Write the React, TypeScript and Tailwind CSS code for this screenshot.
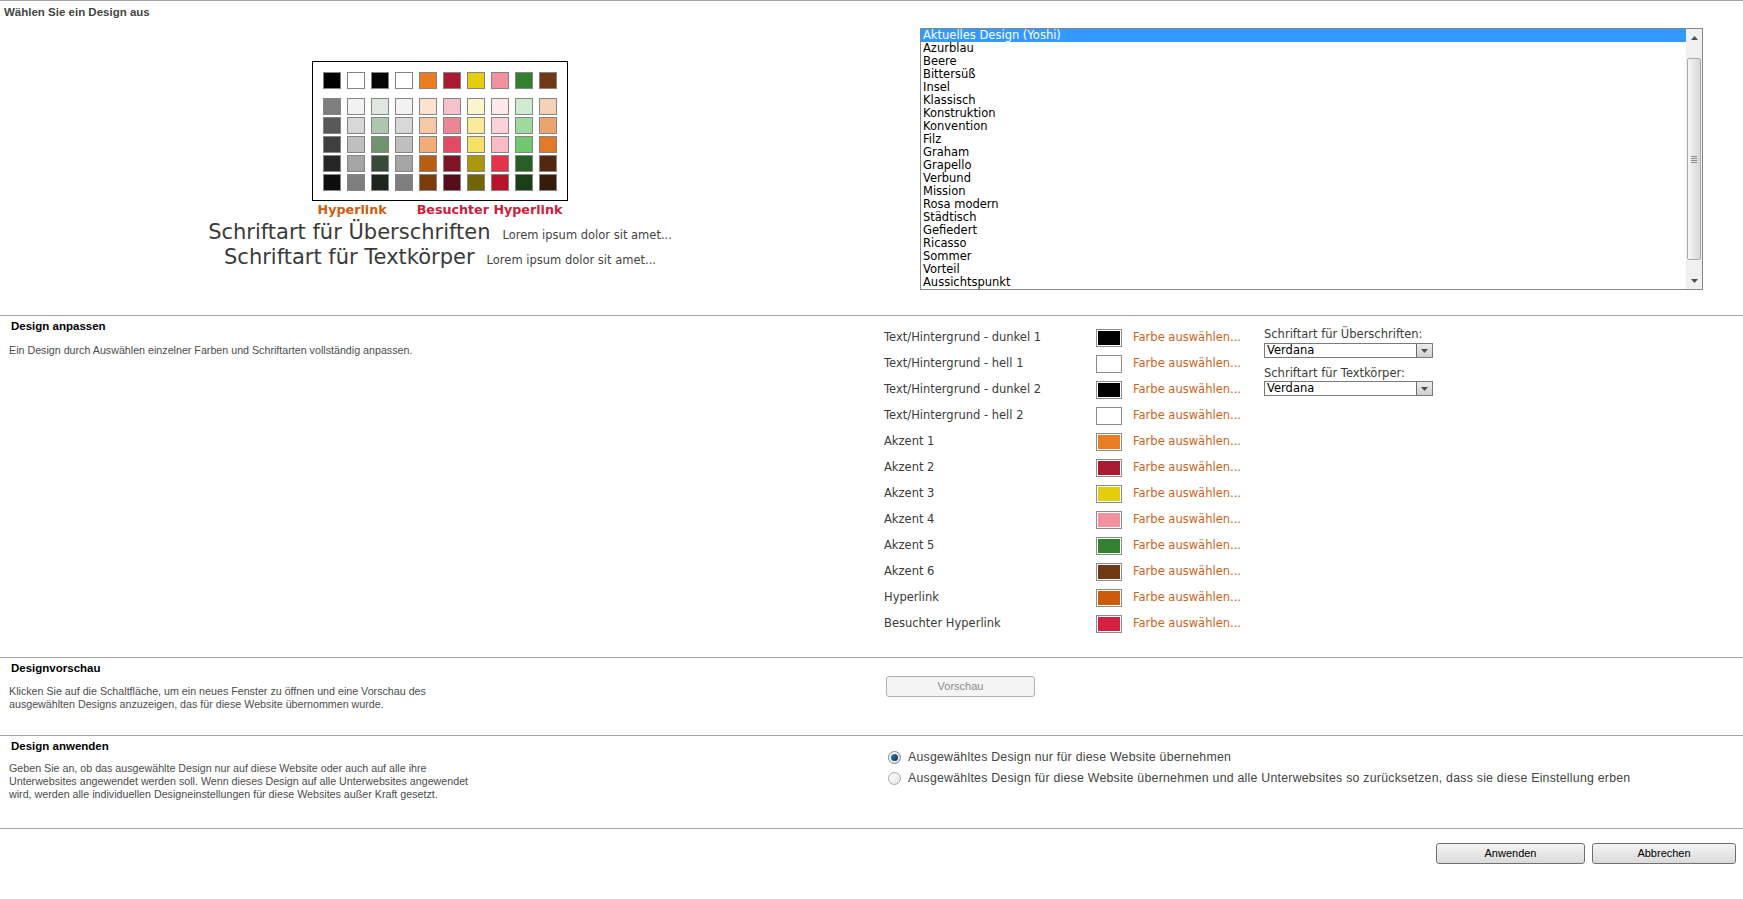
import React from "react";

const verdana = "font-['DejaVu_Sans',Verdana,sans-serif]";
const tahoma = "font-['Liberation_Sans',Tahoma,Arial,sans-serif]";

// Spalten der Farbpalette: oberste Zeile = Grundfarbe, dann 5 Abstufungen
const palette: string[][] = [
  ["#000000", "#7f7f7f", "#595959", "#3f3f3f", "#262626", "#0d0d0d"],
  ["#ffffff", "#f2f2f2", "#d8d8d8", "#bfbfbf", "#a5a5a5", "#7f7f7f"],
  ["#050505", "#e0e6e0", "#adc6ad", "#6e936d", "#374b37", "#1c251c"],
  ["#ffffff", "#f2f2f2", "#d8d8d8", "#bfbfbf", "#a5a5a5", "#7f7f7f"],
  ["#ea7d22", "#fbe3d2", "#f7c8a5", "#f3ac79", "#b95d10", "#7b3e0b"],
  ["#a81b33", "#f4c2cb", "#ea8696", "#e14c64", "#7e1426", "#540e19"],
  ["#e4cd0c", "#fbf5cc", "#f8eb9a", "#f4e167", "#ab980a", "#726507"],
  ["#f3929f", "#fde8eb", "#fbd2d8", "#f9bcc5", "#e6334c", "#b8132b"],
  ["#338031", "#d0ecd0", "#a0d9a0", "#71c670", "#276024", "#1a4018"],
  ["#6e3a15", "#f5d2b5", "#eba46d", "#e27a2a", "#53290e", "#371b09"],
];

const designs = [
  "Aktuelles Design (Yoshi)",
  "Azurblau",
  "Beere",
  "Bittersüß",
  "Insel",
  "Klassisch",
  "Konstruktion",
  "Konvention",
  "Filz",
  "Graham",
  "Grapello",
  "Verbund",
  "Mission",
  "Rosa modern",
  "Städtisch",
  "Gefiedert",
  "Ricasso",
  "Sommer",
  "Vorteil",
  "Aussichtspunkt",
];

const colorRows: [string, string][] = [
  ["Text/Hintergrund - dunkel 1", "#000000"],
  ["Text/Hintergrund - hell 1", "#ffffff"],
  ["Text/Hintergrund - dunkel 2", "#000000"],
  ["Text/Hintergrund - hell 2", "#ffffff"],
  ["Akzent 1", "#ea7d22"],
  ["Akzent 2", "#a81b33"],
  ["Akzent 3", "#e4cd0c"],
  ["Akzent 4", "#f3929f"],
  ["Akzent 5", "#338031"],
  ["Akzent 6", "#6e3a15"],
  ["Hyperlink", "#cc5c0c"],
  ["Besuchter Hyperlink", "#d5203f"],
];

const Swatch = ({ color }: { color: string }) => (
  <div className="w-[18px] h-[17px] border border-[#858585]" style={{ backgroundColor: color }} />
);

const Arrow = ({ down = false }: { down?: boolean }) => (
  <svg width="7" height="4" viewBox="0 0 7 4" className={down ? "rotate-180" : ""}>
    <path d="M3.5 0 L7 4 L0 4 Z" fill="#4d4d4d" />
  </svg>
);

const FontSelect = () => (
  <div className="w-[169px] h-[15px] border border-[#7a7a7a] flex bg-white">
    <div className={`flex-1 pl-[2px] text-[11.5px] leading-[13px] text-black ${verdana}`}>Verdana</div>
    <div className="w-[16px] border-l border-[#6b6b6b] bg-gradient-to-b from-[#ececec] to-[#cfcfcf] flex items-center justify-center">
      <Arrow down />
    </div>
  </div>
);

const Radio = ({ checked }: { checked?: boolean }) => (
  <div
    className={`w-[13px] h-[13px] shrink-0 rounded-full border flex items-center justify-center ${
      checked ? "border-[#7b8690] bg-gradient-to-br from-[#ffffff] to-[#dcdcdc]" : "border-[#a9a9a9] bg-gradient-to-br from-[#ffffff] to-[#e4e4e4]"
    }`}
  >
    {checked && <div className="w-[7px] h-[7px] rounded-full bg-gradient-to-br from-[#3f7bb4] to-[#0d2f55]" />}
  </div>
);

export default function App() {
  return (
    <div className="w-[1743px] h-[899px] bg-white overflow-hidden">
      {/* Wählen Sie ein Design aus */}
      <div className="h-[315px] border-t border-[#a3a3a3] flex">
        <div className="w-[920px] shrink-0">
          <div className={`pl-[4px] pt-[5px] h-[18px] text-[11.5px] leading-[13px] font-bold text-[#454545] ${tahoma}`}>
            Wählen Sie ein Design aus
          </div>
          <div className="w-[880px] flex flex-col items-center pt-[42px]">
            <div className="w-[256px] border border-black px-[10px] pt-[10px] pb-[9px] bg-white">
              <div className="flex gap-[6px]">
                {palette.map((col, i) => (
                  <Swatch key={i} color={col[0]} />
                ))}
              </div>
              <div className="flex gap-[6px] mt-[9px]">
                {palette.map((col, i) => (
                  <div key={i} className="flex flex-col gap-[2px]">
                    {col.slice(1).map((c, j) => (
                      <Swatch key={j} color={c} />
                    ))}
                  </div>
                ))}
              </div>
            </div>
            <div className={`mt-[2px] flex gap-[30px] text-[12.7px] leading-[14px] font-bold ${verdana}`}>
              <span className="text-[#cc5c0c]">Hyperlink</span>
              <span className="text-[#c8203c]">Besuchter Hyperlink</span>
            </div>
            <div className={`mt-[3px] flex items-baseline gap-[12px] text-[#3a3a3a] ${verdana}`}>
              <span className="text-[21px] leading-[25px]">Schriftart für Überschriften</span>
              <span className="text-[11.5px] text-[#444]">Lorem ipsum dolor sit amet...</span>
            </div>
            <div className={`flex items-baseline gap-[12px] text-[#3a3a3a] ${verdana}`}>
              <span className="text-[21px] leading-[25px]">Schriftart für Textkörper</span>
              <span className="text-[11.5px] text-[#444]">Lorem ipsum dolor sit amet...</span>
            </div>
          </div>
        </div>
        <div className="pt-[27px]">
          <div className="w-[783px] h-[262px] border border-[#828790] flex bg-white">
            <div className={`flex-1 overflow-hidden text-[11.5px] leading-[13px] text-black ${verdana}`}>
              {designs.map((d, i) => (
                <div key={d} className={`h-[13px] pl-[2px] ${i === 0 ? "bg-[#3399ff] text-white" : ""}`}>
                  {d}
                </div>
              ))}
            </div>
            <div className="w-[16px] bg-[#f0f0f0] flex flex-col">
              <div className="h-[17px] flex items-center justify-center">
                <Arrow />
              </div>
              <div className="flex-1 mx-[1px] my-[12px] rounded-[2px] border border-[#a9a9a9] bg-gradient-to-r from-[#f6f6f6] to-[#d8d8d8] flex items-center justify-center">
                <div className="flex flex-col gap-[1px]">
                  <div className="w-[6px] h-[1px] bg-[#8a8a8a]" />
                  <div className="w-[6px] h-[1px] bg-[#8a8a8a]" />
                  <div className="w-[6px] h-[1px] bg-[#8a8a8a]" />
                  <div className="w-[6px] h-[1px] bg-[#8a8a8a]" />
                </div>
              </div>
              <div className="h-[17px] flex items-center justify-center">
                <Arrow down />
              </div>
            </div>
          </div>
        </div>
      </div>

      {/* Design anpassen */}
      <div className="h-[342px] border-t border-[#a3a3a3] flex">
        <div className={`w-[884px] shrink-0 ${tahoma}`}>
          <div className="pl-[11px] pt-[4px] text-[11.5px] leading-[13px] font-bold text-black">Design anpassen</div>
          <div className="pl-[9px] mt-[11px] text-[10.7px] leading-[13px] text-[#4c4c4c]">
            Ein Design durch Auswählen einzelner Farben und Schriftarten vollständig anpassen.
          </div>
        </div>
        <div className={`flex ${verdana}`}>
          <div className="w-[380px] pt-[9px]">
            {colorRows.map(([label, color]) => (
              <div key={label} className="h-[26px] flex items-center text-[11.5px]">
                <div className="w-[212px] text-[#3b3b3b]">{label}</div>
                <div className="w-[26px] h-[18px] border border-[#8c8c8c] p-[1px] bg-white">
                  <div className="w-full h-full" style={{ backgroundColor: color }} />
                </div>
                <div className="ml-[11px] text-[#c9651c]">Farbe auswählen...</div>
              </div>
            ))}
          </div>
          <div className="pt-[12px] text-[11.5px] leading-[13px] text-[#3b3b3b]">
            <div>Schriftart für Überschriften:</div>
            <div className="mt-[2px]">
              <FontSelect />
            </div>
            <div className="mt-[9px]">Schriftart für Textkörper:</div>
            <div className="mt-[1px]">
              <FontSelect />
            </div>
          </div>
        </div>
      </div>

      {/* Designvorschau */}
      <div className="h-[78px] border-t border-[#a3a3a3] flex">
        <div className={`w-[884px] shrink-0 ${tahoma}`}>
          <div className="pl-[11px] pt-[4px] text-[11.5px] leading-[13px] font-bold text-black">Designvorschau</div>
          <div className="pl-[9px] mt-[10px] text-[10.7px] leading-[13px] text-[#4c4c4c]">
            Klicken Sie auf die Schaltfläche, um ein neues Fenster zu öffnen und eine Vorschau des
            <br />
            ausgewählten Designs anzuzeigen, das für diese Website übernommen wurde.
          </div>
        </div>
        <div className="pt-[18px] pl-[2px] flex items-start">
          <button
            className={`w-[149px] h-[21px] rounded-[3px] border border-[#adb2b5] bg-[#f4f4f4] text-[11px] text-[#8a8a8a] ${tahoma}`}
          >
            Vorschau
          </button>
        </div>
      </div>

      {/* Design anwenden */}
      <div className="h-[93px] border-t border-[#a3a3a3] flex">
        <div className={`w-[884px] shrink-0 ${tahoma}`}>
          <div className="pl-[11px] pt-[4px] text-[11.5px] leading-[13px] font-bold text-black">Design anwenden</div>
          <div className="pl-[9px] mt-[9px] text-[10.7px] leading-[13px] text-[#4c4c4c]">
            Geben Sie an, ob das ausgewählte Design nur auf diese Website oder auch auf alle ihre
            <br />
            Unterwebsites angewendet werden soll. Wenn dieses Design auf alle Unterwebsites angewendet
            <br />
            wird, werden alle individuellen Designeinstellungen für diese Websites außer Kraft gesetzt.
          </div>
        </div>
        <div className={`pt-[11px] pl-[4px] text-[12.3px] tracking-[0.25px] text-[#444] ${tahoma}`}>
          <div className="h-[21px] flex items-center gap-[7px]">
            <Radio checked />
            <span>Ausgewähltes Design nur für diese Website übernehmen</span>
          </div>
          <div className="h-[21px] flex items-center gap-[7px] whitespace-nowrap">
            <Radio />
            <span>
              Ausgewähltes Design für diese Website übernehmen und alle Unterwebsites so zurücksetzen, dass sie diese
              Einstellung erben
            </span>
          </div>
        </div>
      </div>

      {/* Schaltflächen */}
      <div className={`border-t border-[#a3a3a3] pt-[14px] pr-[7px] flex justify-end gap-[7px] ${tahoma}`}>
        <button className="w-[149px] h-[21px] rounded-[3px] border border-[#707070] bg-gradient-to-b from-[#f4f4f4] to-[#dadada] text-[11px] text-black">
          Anwenden
        </button>
        <button className="w-[144px] h-[21px] rounded-[3px] border border-[#707070] bg-gradient-to-b from-[#f4f4f4] to-[#dadada] text-[11px] text-black">
          Abbrechen
        </button>
      </div>
    </div>
  );
}
